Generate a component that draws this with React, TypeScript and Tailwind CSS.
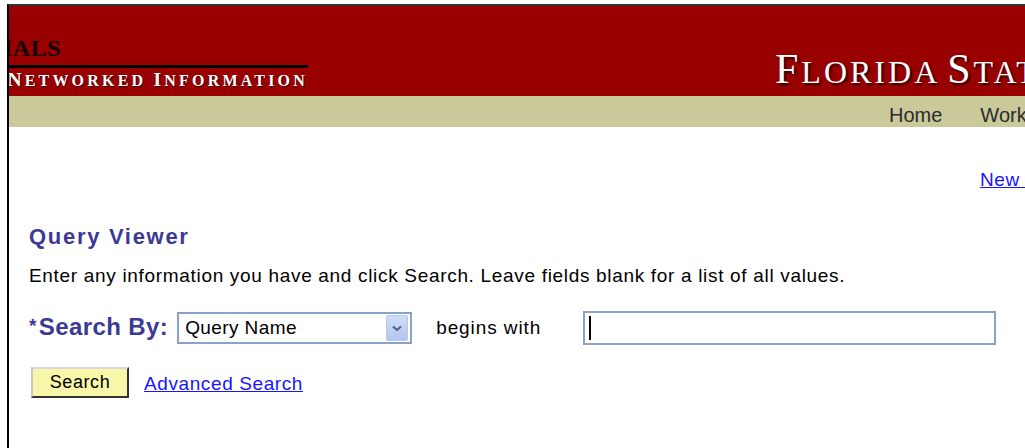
import React from 'react';

const serif = { fontFamily: '"Liberation Serif", "Times New Roman", serif' };
const sans = { fontFamily: '"Liberation Sans", Arial, sans-serif' };

// Engraved-style small caps: first letter of each word large, the rest uppercase at a smaller size.
function SmallCaps({ text, big, small }: { text: string; big: string; small: string }) {
  return (
    <>
      {text.split(' ').map((word, i) => (
        <React.Fragment key={i}>
          {i > 0 && ' '}
          <span className={big}>{word[0]}</span>
          <span className={small}>{word.slice(1).toUpperCase()}</span>
        </React.Fragment>
      ))}
    </>
  );
}

function Banner() {
  return (
    <div className="h-[90px] bg-[#990000] flex overflow-hidden whitespace-nowrap">
      <div className="w-[299px] shrink-0 flex flex-col" style={serif}>
        <div className="mt-[29px] w-[52px] h-[26px] flex justify-end overflow-hidden">
          <span className="text-[24px] leading-[26px] font-bold text-[#140000] tracking-[0.5px]">ESSENTIALS</span>
        </div>
        <div className="h-[3px] bg-black mt-[4px]" />
        <div className="mt-[2px] h-[22px] flex justify-end items-end overflow-hidden">
          <span className="leading-[22px] font-semibold text-white tracking-[3.2px] [text-shadow:1px_1px_1px_#3a0000]">
            <SmallCaps text="Networked Information" big="text-[19.5px]" small="text-[16px]" />
          </span>
        </div>
      </div>
      <div
        className="ml-[467px] shrink-0 mt-[39px] leading-[48px] text-white tracking-[3px] [text-shadow:2px_2px_2px_#2a0000]"
        style={serif}
      >
        <SmallCaps text="Florida State University" big="text-[42px]" small="text-[32px]" />
      </div>
    </div>
  );
}

function NavBar() {
  return (
    <div className="h-[31px] bg-[#c9c99a] flex items-center pl-[880px] gap-[38px] text-[20px] text-[#2b2b2b] whitespace-nowrap overflow-hidden" style={sans}>
      <span className="pt-[6px]">Home</span>
      <span className="pt-[6px]">Worklist</span>
    </div>
  );
}

function ChevronButton() {
  return (
    <div className="w-[22px] h-[26px] rounded-[2px] bg-gradient-to-b from-[#cfdcf8] to-[#b3c6ef] border border-[#b8c9ec] flex items-center justify-center">
      <svg width="10" height="7" viewBox="0 0 10 7">
        <path d="M1 1.5 L5 5 L9 1.5" fill="none" stroke="#4d5f85" strokeWidth="2" />
      </svg>
    </div>
  );
}

export default function App() {
  return (
    <div className="w-[1025px] h-[448px] bg-white overflow-hidden pl-[7px] pt-[4px]" style={sans}>
      <div className="h-full border-l-2 border-t-2 border-l-black border-t-[#333] overflow-hidden">
        <Banner />
        <NavBar />

        <div className="pl-[20px] text-[19px] tracking-[0.6px] text-black whitespace-nowrap">
          <div className="mt-[42px] h-[22px] leading-[22px] pl-[951px]">
            <a className="text-[#1515ff] underline" href="#">New Window</a>
          </div>

          <div className="mt-[33px] h-[26px] leading-[26px] text-[22px] font-bold text-[#3a3a96] tracking-[1.7px]">
            Query Viewer
          </div>

          <div className="mt-[15px] h-[22px] leading-[22px] tracking-[0.68px]">
            Enter any information you have and click Search. Leave fields blank for a list of all values.
          </div>

          <div className="mt-[24px] h-[34px] flex items-center">
            <span className="font-bold text-[#3a3a96] text-[24px] leading-[28px] -mt-[4px] tracking-[0.4px]">
              <span className="text-[19px] align-[3px] mr-[2px]">*</span>Search By:
            </span>
            <div className="ml-[9px] w-[235px] h-[32px] border-2 border-[#8aa3c4] flex items-center pl-[6px] pr-[2px] tracking-[0.4px]">
              <span className="flex-1">Query Name</span>
              <ChevronButton />
            </div>
            <span className="ml-[24px] tracking-[0.9px]">begins with</span>
            <div className="ml-[42px] w-[413px] h-[34px] border-2 border-[#8aa3c4] flex items-center pl-[4px]">
              <div className="w-[2px] h-[24px] bg-black" />
            </div>
          </div>

          <div className="mt-[22px] h-[31px] flex items-center">
            <button className="ml-[2px] w-[98px] h-[31px] bg-[#f8f6a8] border-2 border-t-[#d8d8d8] border-l-[#c8c8c8] border-r-[#333] border-b-[#333] text-[18px] tracking-[0.6px] text-black">
              Search
            </button>
            <a className="ml-[15px] mt-[3px] text-[#1515ff] underline" href="#">Advanced Search</a>
          </div>
        </div>
      </div>
    </div>
  );
}
